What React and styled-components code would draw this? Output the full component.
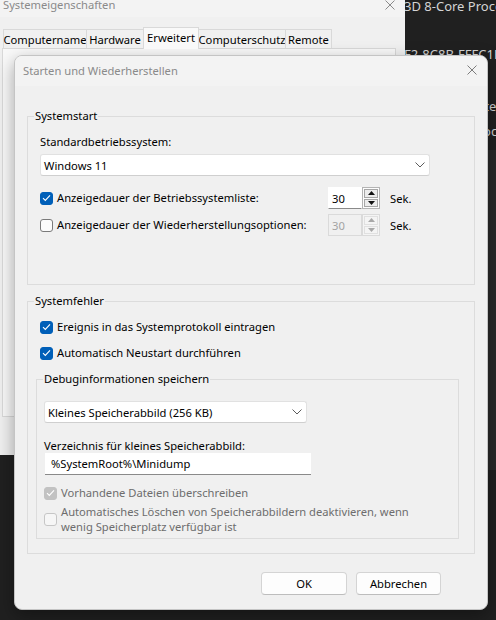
import React from "react";
import styled, { createGlobalStyle } from "styled-components";

const FONT = `"Noto Sans", "Segoe UI", Arial, sans-serif`;
const FS = "11.2px";

const Global = createGlobalStyle`
  html, body { margin: 0; padding: 0; background: #202020; }
  body { font-family: ${FONT}; font-size: ${FS}; color: #000; }
  #root { width: 496px; height: 620px; }
  * { box-sizing: border-box; }
`;

const Desktop = styled.div`
  position: relative;
  width: 496px;
  height: 620px;
  overflow: hidden;
  background: #202020;
`;

/* ---------- background (things on the desktop) ---------- */
const DarkBlock = styled.div`
  position: absolute;
  left: 404px;
  top: 150px;
  width: 92px;
  height: 320px;
  background: #292929;
`;

const BgText = styled.span`
  position: absolute;
  white-space: nowrap;
  color: #d4d4d4;
  font-size: 13px;
  line-height: 16px;
`;

const BackWindow = styled.div`
  position: absolute;
  left: 0;
  top: -8px;
  width: 405px;
  height: 463px;
  background: #f0f0f0;
  display: flex;
  flex-direction: column;
`;

const BackTitle = styled.div`
  height: 25px;
  flex: none;
  background: #f3f3f3;
  display: flex;
  align-items: center;
  justify-content: space-between;
  padding: 0 10px 0 3px;
  color: #8a8a8a;
`;

const TabRow = styled.div`
  position: relative;
  z-index: 2;
  height: 32px;
  flex: none;
  display: flex;
  align-items: flex-end;
  padding-left: 3px;
`;

const Tab = styled.div`
  width: ${(p) => p.$w}px;
  height: ${(p) => (p.$active ? 22 : 19)}px;
  margin-bottom: ${(p) => (p.$active ? 0 : 1)}px;
  margin-right: -1px;
  border: 1px solid #d9d9d9;
  border-bottom: none;
  background: ${(p) => (p.$active ? "#f9f9f9" : "#f0f0f0")};
  display: flex;
  align-items: center;
  justify-content: center;
  padding-bottom: ${(p) => (p.$active ? 3 : 0)}px;
  white-space: nowrap;
  position: relative;
  z-index: ${(p) => (p.$active ? 1 : 0)};
`;

const TabPanel = styled.div`
  margin: -1px 0 0 2px;
  width: 394px;
  height: 369px;
  flex: none;
  border: 1px solid #d9d9d9;
  background: #f9f9f9;
`;

/* ---------- the dialog ---------- */
const Dialog = styled.div`
  position: absolute;
  left: 14px;
  top: 55px;
  width: 474px;
  height: 555px;
  background: #f0f0f0;
  border: 1px solid #c4c4c4;
  border-radius: 8px;
  box-shadow: 0 6px 18px rgba(0, 0, 0, 0.35);
  display: flex;
  flex-direction: column;
  overflow: hidden;
`;

const TitleBar = styled.div`
  height: 30px;
  flex: none;
  background: #f3f3f3;
  display: flex;
  align-items: center;
  justify-content: space-between;
  padding: 0 10px 2px 8px;
  color: #8a8a8a;
`;

const Body = styled.div`
  flex: 1;
  display: flex;
  flex-direction: column;
  padding: 22px 12px 0 12px;
`;

const Group = styled.fieldset`
  margin: ${(p) => p.$mt || 0}px 0 0 0;
  padding: 0;
  min-width: 0;
  border: 1px solid #dcdcdc;
  align-self: stretch;
`;

const Legend = styled.legend`
  margin-left: 6px;
  padding: 0 1px;
  line-height: 16px;
`;

const GroupBody = styled.div`
  display: flex;
  flex-direction: column;
  align-items: flex-start;
  padding: ${(p) => p.$pad};
`;

const Label = styled.div`
  line-height: ${(p) => p.$lh || 16}px;
  margin-top: ${(p) => p.$mt || 0}px;
  white-space: nowrap;
`;

const Combo = styled.div`
  margin-top: ${(p) => p.$mt || 0}px;
  width: ${(p) => p.$w}px;
  height: 22px;
  background: #fff;
  border: 1px solid #e1e1e1;
  border-bottom-color: #cfcfcf;
  border-radius: 3px;
  display: flex;
  align-items: center;
  justify-content: space-between;
  padding: 0 4px 0 3px;
  white-space: nowrap;
`;

const TextInput = styled.div`
  margin: ${(p) => p.$mt || 0}px 0 0 1px;
  width: ${(p) => p.$w}px;
  height: 22px;
  background: #fff;
  border-bottom: 1px solid #8a8a8a;
  display: flex;
  align-items: center;
  padding-left: 6px;
  white-space: nowrap;
`;

const SpinRow = styled.div`
  margin-top: ${(p) => p.$mt || 0}px;
  height: 22px;
  display: grid;
  grid-template-columns: 288px auto auto;
  align-items: center;
`;

const CheckRow = styled.label`
  display: flex;
  align-items: center;
  gap: 4px;
  margin: ${(p) => p.$mt || 0}px 0 0 ${(p) => p.$ml || 0}px;
  line-height: ${(p) => p.$lh || 16}px;
  color: ${(p) => (p.$dim ? "#6d6d6d" : "#000")};
  white-space: nowrap;
`;

const Box = styled.span`
  flex: none;
  width: 13px;
  height: 13px;
  border-radius: 3px;
  display: flex;
  align-items: center;
  justify-content: center;
  background: ${(p) =>
    p.$checked ? (p.$disabled ? "#c2c2c2" : "#005fb8") : p.$disabled ? "#f6f6f6" : "#fbfbfb"};
  border: 1px solid
    ${(p) =>
      p.$checked ? (p.$disabled ? "#c2c2c2" : "#005fb8") : p.$disabled ? "#c6c6c6" : "#7a7a7a"};
`;

const Spin = styled.div`
  display: flex;
  height: 22px;
`;

const SpinInput = styled.div`
  width: 34px;
  height: 22px;
  display: flex;
  align-items: center;
  padding-left: 3px;
  background: ${(p) => (p.$disabled ? "#f0f0f0" : "#fff")};
  color: ${(p) => (p.$disabled ? "#a3a3a3" : "#000")};
  border: 1px solid ${(p) => (p.$disabled ? "#dadada" : "#fff")};
  border-bottom-color: ${(p) => (p.$disabled ? "#dadada" : "#8a8a8a")};
`;

const SpinButtons = styled.div`
  width: 18px;
  height: 22px;
  display: flex;
  flex-direction: column;
  border: 1px solid ${(p) => (p.$disabled ? "#dadada" : "#b4b4b4")};
  background: ${(p) => (p.$disabled ? "#f4f4f4" : "#fdfdfd")};
  padding: 1px;
  gap: 1px;
`;

const SpinBtn = styled.div`
  flex: 1;
  border: 1px solid ${(p) => (p.$disabled ? "#e0e0e0" : "#a6a6a6")};
  background: ${(p) => (p.$disabled ? "#f4f4f4" : "#ececec")};
  display: flex;
  align-items: center;
  justify-content: center;
`;

const Unit = styled.span`
  padding-left: 10px;
`;

const ButtonRow = styled.div`
  margin-top: 18px;
  display: flex;
  justify-content: flex-end;
  gap: 9px;
  padding-right: 34px;
`;

const Button = styled.button`
  width: ${(p) => p.$w}px;
  height: 23px;
  font-family: ${FONT};
  font-size: ${FS};
  color: #000;
  background: #fdfdfd;
  border: 1px solid #d4d4d4;
  border-bottom-color: #bdbdbd;
  border-radius: 4px;
  padding: 0;
`;

/* ---------- icons ---------- */
const CloseIcon = ({ color = "#7c7c7c" }) => (
  <svg width="10" height="10" viewBox="0 0 10 10">
    <path d="M0.5 0.5 L9.5 9.5 M9.5 0.5 L0.5 9.5" stroke={color} strokeWidth="1" />
  </svg>
);

const Chevron = () => (
  <svg width="10" height="6" viewBox="0 0 10 6">
    <path d="M0.5 0.5 L5 5 L9.5 0.5" stroke="#5c5c5c" strokeWidth="1" fill="none" />
  </svg>
);

const Check = () => (
  <svg width="9" height="8" viewBox="0 0 9 8">
    <path d="M1 4.2 L3.3 6.4 L8 1.4" stroke="#fff" strokeWidth="1.1" fill="none" />
  </svg>
);

const Arrow = ({ up, disabled }) => (
  <svg width="7" height="4" viewBox="0 0 7 4">
    <path d={up ? "M0 4 L3.5 0 L7 4 Z" : "M0 0 L3.5 4 L7 0 Z"} fill={disabled ? "#a8a8a8" : "#111"} />
  </svg>
);

const Checkbox = ({ checked, disabled }) => (
  <Box $checked={checked} $disabled={disabled}>
    {checked && <Check />}
  </Box>
);

const SpinBox = ({ value, disabled }) => (
  <Spin>
    <SpinInput $disabled={disabled}>{value}</SpinInput>
    <SpinButtons $disabled={disabled}>
      <SpinBtn $disabled={disabled}>
        <Arrow up disabled={disabled} />
      </SpinBtn>
      <SpinBtn $disabled={disabled}>
        <Arrow disabled={disabled} />
      </SpinBtn>
    </SpinButtons>
  </Spin>
);

const tabs = [
  { t: "Computername", w: 84 },
  { t: "Hardware", w: 58 },
  { t: "Erweitert", w: 56, active: true },
  { t: "Computerschutz", w: 88 },
  { t: "Remote", w: 47 },
];

export default function App() {
  return (
    <>
      <Global />
      <Desktop>
        <DarkBlock />
        <BgText style={{ left: 404, top: -2 }}>3D 8-Core Processor</BgText>
        <BgText style={{ left: 404, top: 46 }}>F2-8C8B-FFFC1F</BgText>
        <BgText style={{ left: 478, top: 98 }}>ste</BgText>
        <BgText style={{ left: 478, top: 123 }}>roc</BgText>

        <BackWindow>
          <BackTitle>
            <span>Systemeigenschaften</span>
            <CloseIcon color="#8a8a8a" />
          </BackTitle>
          <TabRow>
            {tabs.map((t) => (
              <Tab key={t.t} $w={t.w} $active={t.active}>
                {t.t}
              </Tab>
            ))}
          </TabRow>
          <TabPanel />
        </BackWindow>

        <Dialog>
          <TitleBar>
            <span>Starten und Wiederherstellen</span>
            <CloseIcon />
          </TitleBar>
          <Body>
            <Group>
              <Legend>Systemstart</Legend>
              <GroupBody $pad="10px 0 48px 12px">
                <Label>Standardbetriebssystem:</Label>
                <Combo $mt={4} $w={390}>
                  <span>Windows 11</span>
                  <Chevron />
                </Combo>
                <SpinRow $mt={11}>
                  <CheckRow>
                    <Checkbox checked />
                    Anzeigedauer der Betriebssystemliste:
                  </CheckRow>
                  <SpinBox value="30" />
                  <Unit>Sek.</Unit>
                </SpinRow>
                <SpinRow $mt={5}>
                  <CheckRow>
                    <Checkbox />
                    Anzeigedauer der Wiederherstellungsoptionen:
                  </CheckRow>
                  <SpinBox value="30" disabled />
                  <Unit>Sek.</Unit>
                </SpinRow>
              </GroupBody>
            </Group>

            <Group $mt={8}>
              <Legend>Systemfehler</Legend>
              <GroupBody $pad="10px 15px 14px 8px">
                <CheckRow $ml={4}>
                  <Checkbox checked />
                  Ereignis in das Systemprotokoll eintragen
                </CheckRow>
                <CheckRow $ml={4} $mt={10}>
                  <Checkbox checked />
                  Automatisch Neustart durchführen
                </CheckRow>
                <Group $mt={10}>
                  <Legend>Debuginformationen speichern</Legend>
                  <GroupBody $pad="14px 0 4px 7px">
                    <Combo $w={263}>
                      <span>Kleines Speicherabbild (256 KB)</span>
                      <Chevron />
                    </Combo>
                    <Label $mt={15} $lh={15}>
                      Verzeichnis für kleines Speicherabbild:
                    </Label>
                    <TextInput $w={266}>%SystemRoot%\Minidump</TextInput>
                    <CheckRow $mt={10} $dim>
                      <Checkbox checked disabled />
                      Vorhandene Dateien überschreiben
                    </CheckRow>
                    <CheckRow $mt={3} $lh={15} $dim>
                      <Checkbox disabled />
                      <span>
                        Automatisches Löschen von Speicherabbildern deaktivieren, wenn
                        <br />
                        wenig Speicherplatz verfügbar ist
                      </span>
                    </CheckRow>
                  </GroupBody>
                </Group>
              </GroupBody>
            </Group>

            <ButtonRow>
              <Button $w={86}>OK</Button>
              <Button $w={85}>Abbrechen</Button>
            </ButtonRow>
          </Body>
        </Dialog>
      </Desktop>
    </>
  );
}
